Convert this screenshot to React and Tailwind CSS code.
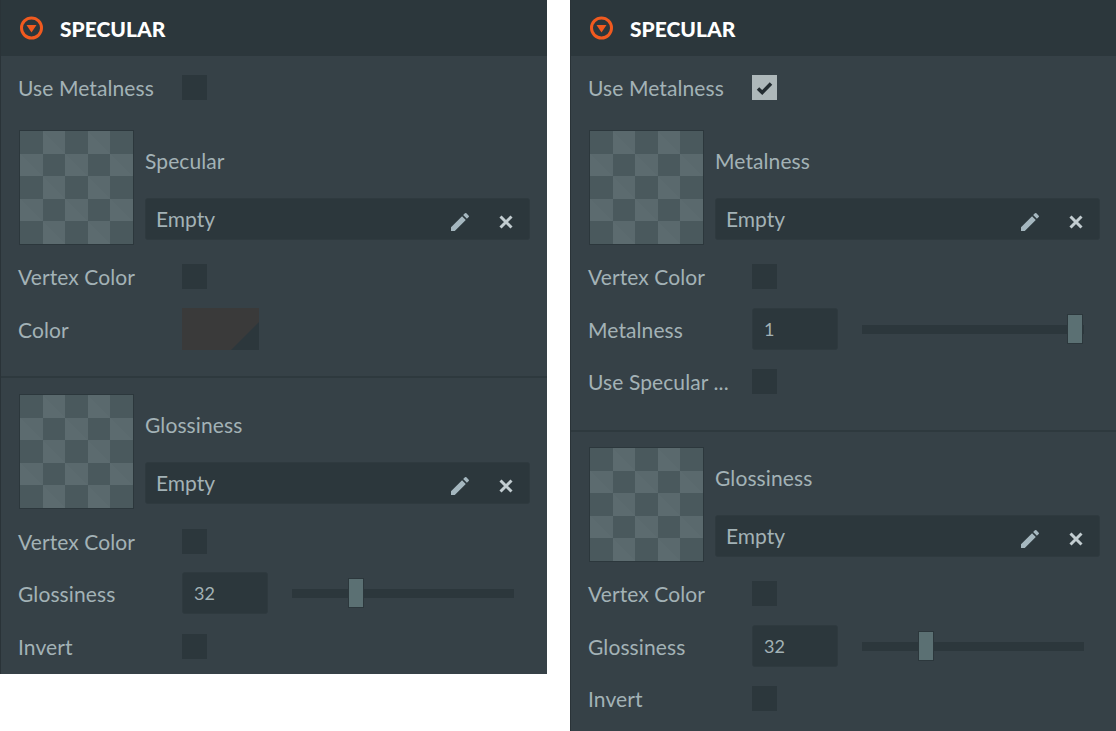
import { MdEdit } from 'react-icons/md';

const CELLS = Array.from({ length: 25 }, (_, i) => i);

function Thumb() {
  return (
    <div className="w-[115px] h-[115px] shrink-0 border border-[#2c373c] grid grid-cols-5 grid-rows-5 overflow-hidden">
      {CELLS.map((i) => (
        <div
          key={i}
          className={
            i % 2 === 0
              ? 'bg-[#4a595d]'
              : 'bg-[linear-gradient(45deg,#5c6b6f_49.5%,#536266_50%,#5a696d_51%)]'
          }
        />
      ))}
    </div>
  );
}

function Checkbox({ checked }) {
  return (
    <div className={`w-[25px] h-[25px] flex items-center justify-center ${checked ? 'bg-[#aeb8ba]' : 'bg-[#2c373c]'}`}>
      {checked && (
        <svg width="17" height="14" viewBox="0 0 17 14">
          <path d="M2 7.5 L6.2 11.5 L15 2.5" fill="none" stroke="#232c31" strokeWidth="3.5" />
        </svg>
      )}
    </div>
  );
}

function Row({ label, className = '', children }) {
  return (
    <div className={`flex items-center ${className}`}>
      <div className="w-[163px] shrink-0 whitespace-nowrap -ml-px mr-px">{label}</div>
      {children}
    </div>
  );
}

function MapSlot({ title }) {
  return (
    <div className="flex gap-[11px]">
      <Thumb />
      <div className="flex-1 min-w-0">
        <div className="h-[68px] leading-[62px]">{title}</div>
        <div className="h-[42px] flex items-center rounded-[3px] bg-[#2c373c] border border-[#2f3a3f] pl-[10px]">
          <span className="flex-1 -mt-px tracking-normal">Empty</span>
          <MdEdit className="text-[#a5b7bf] text-[24px] mr-[27px] mt-[5px]" />
          <svg className="mr-4 mt-[5px]" width="14" height="14" viewBox="0 0 14 14">
            <path d="M1.5 1.5 L12.5 12.5 M12.5 1.5 L1.5 12.5" stroke="#c3cdd1" strokeWidth="3" fill="none" />
          </svg>
        </div>
      </div>
    </div>
  );
}

function NumberSlider({ value, percent }) {
  return (
    <div className="flex items-center">
      <div className="w-[86px] h-[42px] flex items-center rounded-[3px] bg-[#2c373c] border border-[#2f3a3f] pl-[11px] text-[18px]">
        {value}
      </div>
      <div className="relative w-[222px] h-[9px] ml-6 bg-[#2c373c]">
        <div
          className="absolute top-[-11px] w-[16px] h-[30px] bg-[#5b7073] border border-[#2c373c]"
          style={{ left: `${percent}%` }}
        />
      </div>
    </div>
  );
}

function Panel({ metal }) {
  const padding = metal ? 'pl-[18px] pr-[16px]' : 'pl-[18px] pr-[17px]';

  return (
    <div className={`bg-[#364147] text-[#a3b2b6] text-[21px] tracking-[0.1px] leading-none font-['Lato',sans-serif] border-l border-[#2a3338] ${metal ? 'w-[546px] h-[731px]' : 'w-[547px] h-[674px]'}`}>
      <div className="h-[56px] bg-[#2c373c] flex items-center pl-[18px]">
        <svg width="25" height="25" viewBox="0 0 25 25">
          <circle cx="12.5" cy="12" r="10" fill="none" stroke="#f15a1f" strokeWidth="3" />
          <path d="M7.5 9 H17.5 L12.5 16.5 Z" fill="#f15a1f" />
        </svg>
        <span className="ml-[16px] text-white font-black text-[21px] tracking-[0px]">SPECULAR</span>
      </div>

      <div className={`${padding} pt-[19px]`}>
        <Row label="Use Metalness">
          <Checkbox checked={metal} />
        </Row>
        <div className="mt-[30px]">
          <MapSlot title={metal ? 'Metalness' : 'Specular'} />
        </div>
        <Row label="Vertex Color" className="mt-[19px]">
          <Checkbox />
        </Row>
        {metal ? (
          <>
            <Row label="Metalness" className="mt-[19px]">
              <NumberSlider value="1" percent={92.5} />
            </Row>
            <Row label="Use Specular ..." className="mt-[19px]">
              <Checkbox />
            </Row>
          </>
        ) : (
          <Row label="Color" className="mt-[19px]">
            <div className="relative w-[77px] h-[42px] bg-[#3a3a3a]">
              <div className="absolute right-0 bottom-0 w-[28px] h-[28px] bg-[#2c373c] [clip-path:polygon(100%_0,100%_100%,0_100%)]" />
            </div>
          </Row>
        )}
      </div>

      <div className={`h-[2px] bg-[#2e393e] ${metal ? 'mt-[36px]' : 'mt-[26px]'}`} />

      <div className={`${padding} ${metal ? 'pt-[15px]' : 'pt-[16px]'}`}>
        <MapSlot title="Glossiness" />
        <Row label="Vertex Color" className={metal ? 'mt-[19px]' : 'mt-[20px]'}>
          <Checkbox />
        </Row>
        <Row label="Glossiness" className={metal ? 'mt-[19px]' : 'mt-[18px]'}>
          <NumberSlider value="32" percent={25} />
        </Row>
        <Row label="Invert" className={metal ? 'mt-[19px]' : 'mt-[20px]'}>
          <Checkbox />
        </Row>
      </div>
    </div>
  );
}

export default function App() {
  return (
    <div className="flex items-start gap-[23px] w-[1116px] h-[731px] bg-white overflow-hidden">
      <Panel />
      <Panel metal />
    </div>
  );
}
